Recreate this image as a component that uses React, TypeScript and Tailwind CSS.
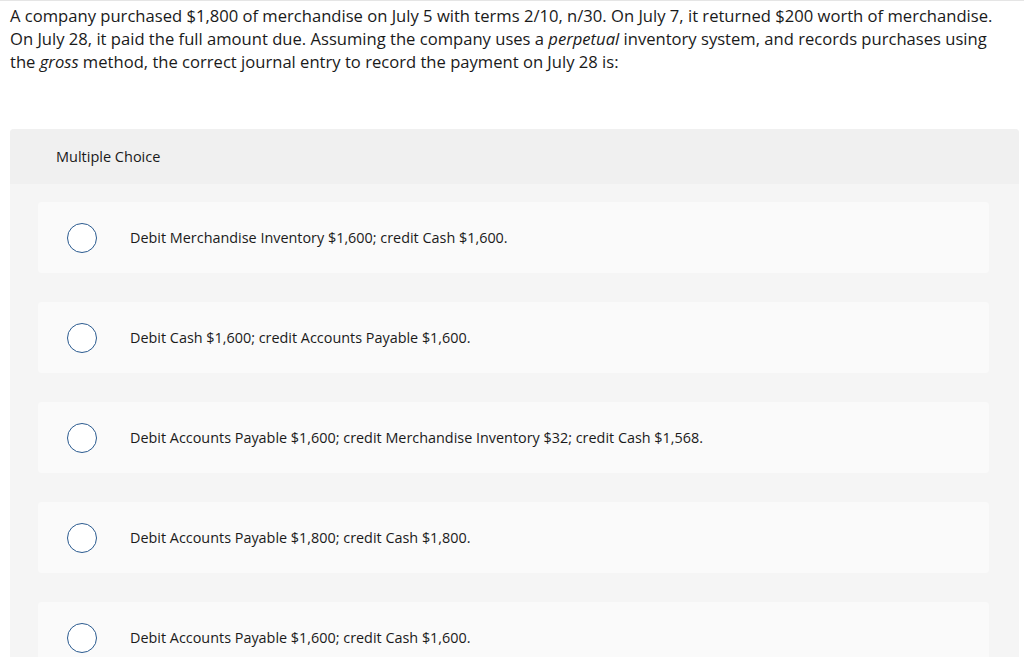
import React from 'react';

const options = [
  'Debit Merchandise Inventory $1,600; credit Cash $1,600.',
  'Debit Cash $1,600; credit Accounts Payable $1,600.',
  'Debit Accounts Payable $1,600; credit Merchandise Inventory $32; credit Cash $1,568.',
  'Debit Accounts Payable $1,800; credit Cash $1,800.',
  'Debit Accounts Payable $1,600; credit Cash $1,600.',
];

export default function App() {
  return (
    <div
      className="h-[657px] overflow-hidden bg-white border-t border-[#e5e5e5] text-[#1a1a1a]"
      style={{ fontFamily: '"Open Sans", Lato, sans-serif' }}
    >
      <p className="px-[10px] pt-[3px] text-[16.6px] leading-[23px] whitespace-nowrap">
        A company purchased $1,800 of merchandise on July 5 with terms 2/10, n/30. On July 7, it returned $200 worth of merchandise.
        <br />
        On July 28, it paid the full amount due. Assuming the company uses a <i>perpetual</i> inventory system, and records purchases using
        <br />
        the <i>gross</i> method, the correct journal entry to record the payment on July 28 is:
      </p>
      <div className="ml-[10px] mr-[5px] mt-[56px] rounded-t bg-[#f5f5f5]">
        <div className="h-[55px] flex items-center pl-[46px] bg-[#f0f0f0] rounded-t text-[14.5px]">Multiple Choice</div>
        <div className="px-[28px] pt-[18px] pr-[30px] flex flex-col gap-[29px]">
          {options.map((o) => (
            <div key={o} className="h-[71px] rounded bg-[#fafafa] flex items-center">
              <span className="ml-[29px] w-[30px] h-[30px] rounded-full border-[1.5px] border-[#2a5a8f] bg-white shrink-0" />
              <span className="ml-[33px] text-[14.4px]">{o}</span>
            </div>
          ))}
        </div>
      </div>
    </div>
  );
}
